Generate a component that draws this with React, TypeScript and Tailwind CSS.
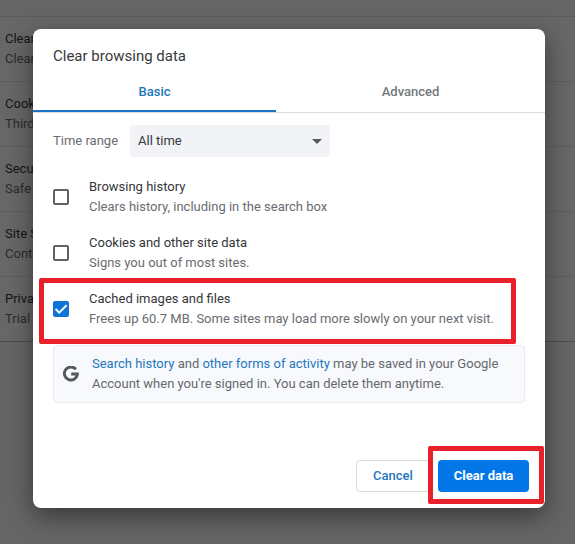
import { useState } from "react";

const settings = [
  { title: "Clear browsing data", detail: "Clear history, cookies, cache, and more" },
  { title: "Cookies and other site data", detail: "Third-party cookies are blocked in Incognito mode" },
  { title: "Security", detail: "Safe Browsing and other security settings" },
  { title: "Site Settings", detail: "Controls what information sites can use" },
  { title: "Privacy Sandbox", detail: "Trial features are on" },
];

const options = [
  {
    id: "history",
    title: "Browsing history",
    detail: "Clears history, including in the search box",
  },
  {
    id: "cookies",
    title: "Cookies and other site data",
    detail: "Signs you out of most sites.",
  },
  {
    id: "cache",
    title: "Cached images and files",
    detail: "Frees up 60.7 MB. Some sites may load more slowly on your next visit.",
  },
];

const Checkbox = ({ checked }: { checked: boolean }) =>
  checked ? (
    <span className="flex size-4 shrink-0 items-center justify-center rounded-xs bg-[#1073d6]">
      <svg viewBox="0 0 16 16" className="size-4" fill="none" stroke="#fff" strokeWidth="2">
        <path d="M2.6 8 6.2 11.6 13.6 4.2" />
      </svg>
    </span>
  ) : (
    <span className="size-4 shrink-0 rounded-xs border-2 border-[#5f6368]" />
  );

const SettingsPage = () => (
  <div className="h-[544px] w-[575px] overflow-hidden bg-[#656565] pt-[17px]">
    <div className="border-b border-[#4c4c4c] bg-[#676767] shadow-[0_-1px_0_#5a5a5a]">
      {settings.map((row) => (
        <div
          key={row.title}
          className="flex h-[65px] flex-col justify-center border-b border-[#5e5e5e] pl-[5px] leading-5 whitespace-nowrap last:h-16 last:border-b-0"
        >
          <div className="text-[#141516]">{row.title}</div>
          <div className="text-[#2b2c2e]">{row.detail}</div>
        </div>
      ))}
    </div>
  </div>
);

const App = () => {
  const [selected, setSelected] = useState<string[]>(["cache"]);

  const toggle = (id: string) => {
    setSelected((prev) =>
      prev.includes(id) ? prev.filter((item) => item !== id) : [...prev, id]
    );
  };

  return (
    <div className="relative h-[544px] w-[575px] overflow-hidden font-[Roboto,sans-serif] text-[13px]">
      <SettingsPage />
      <div className="absolute top-[29px] left-[33px] flex h-[479px] w-[512px] flex-col rounded-lg bg-white shadow-[0_8px_24px_rgba(0,0,0,0.45)]">
        <h1 className="px-5 pt-[17px] text-[15px] leading-5 text-[#38393d]">
          Clear browsing data
        </h1>
        <div className="mt-[5px] flex h-[41px] pt-px font-medium">
          <button className="w-[243px] border-b-2 border-[#1a73c8] pt-px text-[#2176bd]">Basic</button>
          <button className="mb-px grow pt-px text-[#75787c]">Advanced</button>
        </div>
        <div className="h-px bg-[#dadce0]" />

        <div className="mt-[12px] flex items-center px-5">
          <span className="w-[77px] text-[#6a6d71]">Time range</span>
          <button className="flex h-8 w-[200px] items-center justify-between rounded bg-[#f1f3f6] pr-2 pl-2 text-[#38393d]">
            All time
            <svg viewBox="0 0 10 5" className="h-[5px] w-2.5" fill="#55585d">
              <path d="M0 0h10L5 5z" />
            </svg>
          </button>
        </div>

        <div className="mt-3">
          {options.map((option) => (
            <button
              key={option.id}
              onClick={() => toggle(option.id)}
              className="flex h-14 w-full items-center gap-5 px-5 text-left leading-5"
            >
              <Checkbox checked={selected.includes(option.id)} />
              <span>
                <span className="block text-[#343639]">{option.title}</span>
                <span className="block whitespace-nowrap text-[#696c70]">{option.detail}</span>
              </span>
            </button>
          ))}
        </div>

        <div className="mx-5 mt-2 flex h-[58px] items-center rounded border border-[#e8eaed] bg-[#f8f9fd] pl-[9px] leading-5 text-[#65686c]">
          <svg viewBox="0 0 16 16" className="mr-[13px] size-4 shrink-0" fill="none" stroke="#55575b" strokeWidth="2.9">
            <path d="M12.9 3.3A6.5 6.5 0 1 0 14.4 8H8.2" />
          </svg>
          <p className="whitespace-nowrap">
            <a className="text-[#2477bd]">Search history</a> and{" "}
            <a className="text-[#2477bd]">other forms of activity</a> may be saved in your Google
            <br />
            Account when you're signed in. You can delete them anytime.
          </p>
        </div>

        <div className="mt-auto flex justify-end gap-2 pr-4 pb-4">
          <button className="h-8 w-[74px] rounded border border-[#dadce0] font-medium text-[#2477bd]">
            Cancel
          </button>
          <button className="h-8 w-[91px] rounded bg-[#0377e8] font-bold text-white">
            Clear data
          </button>
        </div>
      </div>

      {/* callouts */}
      <div className="pointer-events-none absolute top-[278px] left-[39px] h-[66px] w-[477px] rounded-xs border-5 border-[#e8202a]" />
      <div className="pointer-events-none absolute top-[446px] left-[428px] h-[58px] w-[116px] rounded-xs border-5 border-[#e8202a]" />
    </div>
  );
};

export default App;
